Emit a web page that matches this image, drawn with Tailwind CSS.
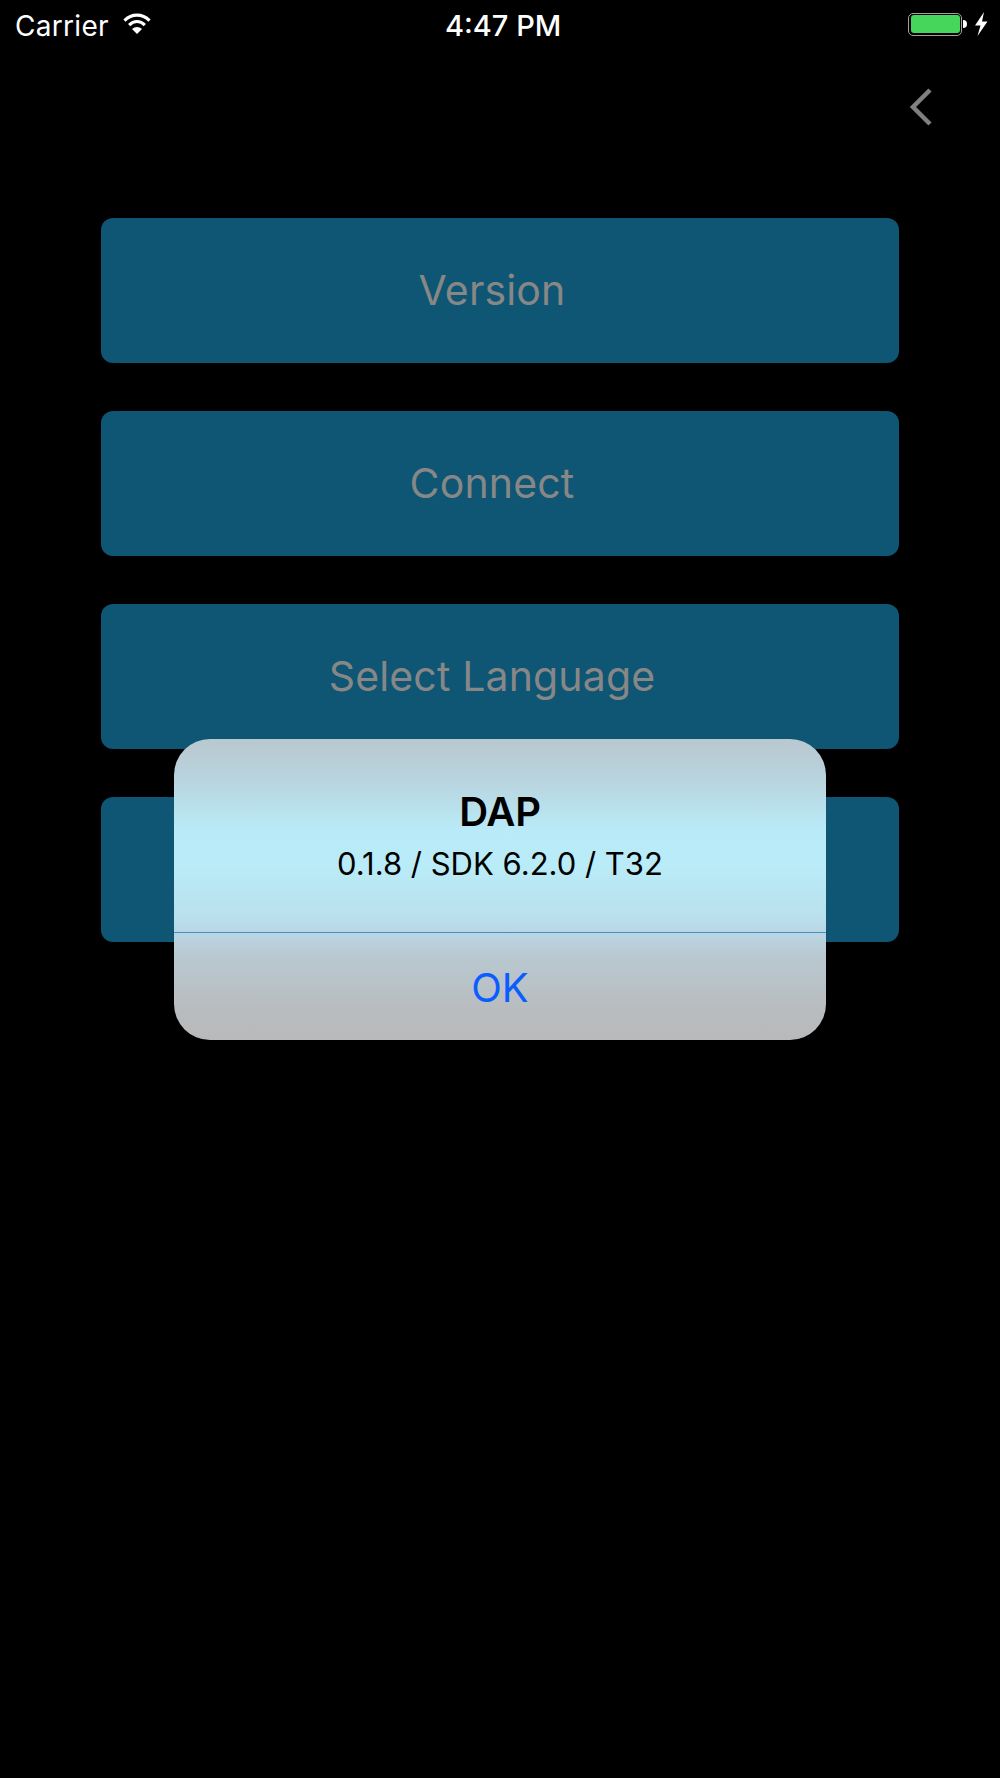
<!DOCTYPE html>
<html>
<head>
<meta charset="utf-8">
<script src="https://cdn.jsdelivr.net/npm/@tailwindcss/browser@4"></script>
</head>
<body class="bg-black">
<div class="relative w-[1000px] h-[1778px] bg-black overflow-hidden font-['Inter','Liberation_Sans',sans-serif]">
  <div class="flex items-center h-[52px] pl-[15px] pr-[12px] relative text-white">
    <span class="text-[28px] leading-[52px] tracking-[0.3px]">Carrier</span>
    <svg class="ml-[13px] mb-[6px]" width="30" height="23" viewBox="0 0 28 22" fill="none" stroke="white" stroke-width="3"><path d="M2 8.2C9 1.2 19 1.2 26 8.2"/><path d="M6.5 12.5C11 8 17 8 21.5 12.5"/><path d="M14 21L9.2 16.2C12 13.6 16 13.6 18.8 16.2Z" fill="white" stroke="none"/></svg>
    <span class="absolute left-[445px] top-0 text-[29px] leading-[52px] font-medium">4:47 PM</span>
    <div class="ml-auto flex items-center gap-[7px] mb-[4px]">
      <div class="flex items-center gap-[1px]">
        <div class="w-[54px] h-[23px] rounded-[5px] border-[1px] border-[#a0a0a0] p-[1.5px]"><div class="w-full h-full rounded-[3px] bg-[#47d65c]"></div></div>
        <div class="w-[4px] h-[8px] rounded-r-[4px] bg-white"></div>
      </div>
      <svg width="14" height="24" viewBox="0 0 14 24" fill="white"><path d="M10 0L1 13.5H6.5L3.5 24L13.5 9.5H8Z"/></svg>
    </div>
  </div>
  <div class="flex justify-end pr-[67px] pt-[36px] h-[166px]">
    <svg width="24" height="38" viewBox="0 0 24 38" fill="none" stroke="#808080" stroke-width="4.5"><path d="M21 2L4 19L21 36"/></svg>
  </div>
  <div class="flex flex-col gap-[48px] ml-[101px] w-[798px]">
    <div class="h-[145px] rounded-[12px] bg-[#0e5673] flex items-center justify-center pr-[16px] text-[41px] tracking-[0.15px] text-[#878787]">Version</div>
    <div class="h-[145px] rounded-[12px] bg-[#0e5673] flex items-center justify-center pr-[16px] text-[41px] tracking-[0.15px] text-[#878787]">Connect</div>
    <div class="h-[145px] rounded-[12px] bg-[#0e5673] flex items-center justify-center pr-[16px] text-[41px] tracking-[0.15px] text-[#878787]">Select Language</div>
    <div class="h-[145px] rounded-[12px] bg-[#0e5673]"></div>
  </div>
  <div class="absolute left-[174px] top-[739px] w-[652px] h-[301px] rounded-[36px] overflow-hidden bg-[linear-gradient(180deg,#b9c8d0_0%,#b9d2dc_12%,#b9eaf7_30%,#b9ecf8_42%,#b9dfec_60%,#b9d6e6_64%,#b9c9d1_72%,#b8bcbf_90%,#b9b9ba_100%)] flex flex-col">
    <div class="h-[193px] flex flex-col items-center text-black pt-[49px]">
      <div class="text-[40px] leading-[48px] font-semibold tracking-[-0.3px]">DAP</div>
      <div class="mt-[9px] text-[31px] leading-[38px]">0.1.8 / SDK 6.2.0 / T32</div>
    </div>
    <div class="h-px bg-[#4a8fb8]"></div>
    <div class="flex-1 flex items-center justify-center pt-[2px] text-[40px] text-[#0a5dff]">OK</div>
  </div>
</div>
</body>
</html>
